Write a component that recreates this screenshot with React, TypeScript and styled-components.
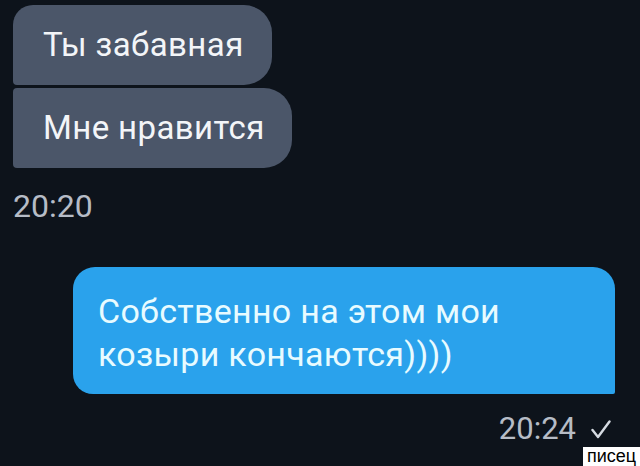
import styled, { createGlobalStyle } from "styled-components";

const GlobalStyle = createGlobalStyle`
  html, body {
    margin: 0;
    padding: 0;
    background: #0d131b;
  }
  body {
    font-family: Roboto, "Liberation Sans", sans-serif;
  }
`;

const Screen = styled.div`
  position: relative;
  width: 640px;
  height: 466px;
  overflow: hidden;
  background: #0d131b;
  padding: 5px 25px 0 13px;
  box-sizing: border-box;
  display: flex;
  flex-direction: column;
`;

const Group = styled.div<{ $out?: boolean }>`
  display: flex;
  flex-direction: column;
  align-items: ${(p) => (p.$out ? "flex-end" : "flex-start")};
  gap: 3px;
`;

const InBubble = styled.div<{ $first?: boolean; $width: number }>`
  width: ${(p) => p.$width}px;
  box-sizing: border-box;
  padding: 21px 0 21px 30px;
  background: #4b5669;
  color: #f3f5f8;
  font-size: 33px;
  letter-spacing: 0.4px;
  line-height: 38px;
  border-radius: ${(p) => (p.$first ? "20px" : "4px")} 28px 28px 4px;
`;

const OutBubble = styled.div`
  width: 542px;
  box-sizing: border-box;
  padding: 23px 20px 18px 25px;
  background: #2aa2ec;
  color: #e8fbff;
  font-size: 34px;
  letter-spacing: 0.3px;
  line-height: 43px;
  border-radius: 22px 22px 2px 20px;
`;

const Time = styled.div<{ $out?: boolean }>`
  display: flex;
  align-items: center;
  gap: 15px;
  color: #b6bcc6;
  font-size: ${(p) => (p.$out ? 31 : 32)}px;
  line-height: 36px;
  margin-top: ${(p) => (p.$out ? 14 : 17)}px;
  padding-right: ${(p) => (p.$out ? 4 : 0)}px;
`;

const Spacer = styled.div`
  height: 43px;
`;

const Watermark = styled.div`
  position: absolute;
  right: 0;
  bottom: 0;
  width: 57px;
  height: 19px;
  background: #ffffff;
  color: #000000;
  font-family: "Liberation Sans", Arial, sans-serif;
  font-size: 18px;
  line-height: 19px;
  text-align: center;
`;

function Check() {
  return (
    <svg width="20" height="19" viewBox="0 0 20 19">
      <path
        d="M1.5 10 L7 17 L18.5 1.5"
        fill="none"
        stroke="#d6dbe2"
        strokeWidth="2.4"
        strokeLinecap="round"
        strokeLinejoin="round"
      />
    </svg>
  );
}

export default function App() {
  return (
    <>
      <GlobalStyle />
      <Screen>
        <Group>
          <InBubble $first $width={259}>Ты забавная</InBubble>
          <InBubble $width={279}>Мне нравится</InBubble>
          <Time>20:20</Time>
        </Group>
        <Spacer />
        <Group $out>
          <OutBubble>
            Собственно на этом мои
            <br />
            козыри кончаются))))
          </OutBubble>
          <Time $out>
            20:24
            <Check />
          </Time>
        </Group>
        <Watermark>писец</Watermark>
      </Screen>
    </>
  );
}
